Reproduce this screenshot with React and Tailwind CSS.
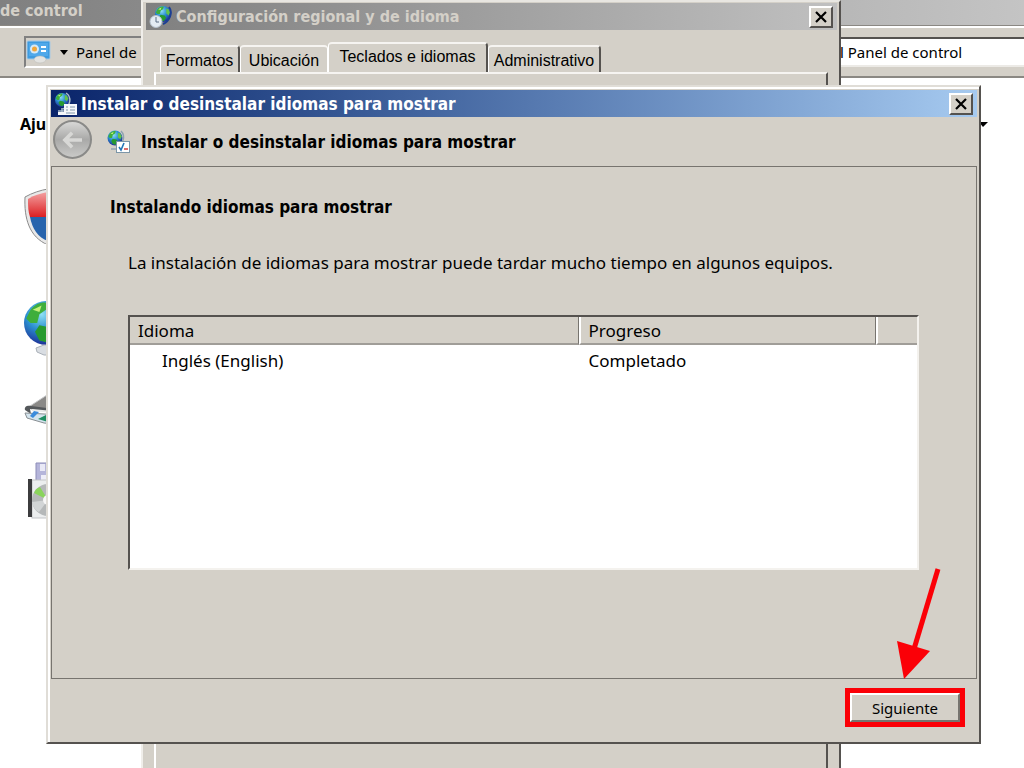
import clsx from 'clsx'

const tabs = [
  { label: 'Formatos', width: 'w-20' },
  { label: 'Ubicación', width: 'w-[88px]' },
  { label: 'Teclados e idiomas', width: 'w-40', active: true },
  { label: 'Administrativo', width: 'w-[113px]' },
]

const languages = [{ name: 'Inglés (English)', progress: 'Completado' }]

function Globe({ cx, cy, r, id }) {
  return (
    <g>
      <defs>
        <radialGradient id={id} cx="40%" cy="30%" r="70%">
          <stop offset="0" stopColor="#8fe0f5" />
          <stop offset="0.5" stopColor="#2b8fd0" />
          <stop offset="1" stopColor="#1d2f96" />
        </radialGradient>
      </defs>
      <g transform={`translate(${cx - r} ${cy - r}) scale(${r / 10})`}>
        <circle cx="10" cy="10" r="10" fill={`url(#${id})`} />
        <path d="M3 4C5 1 9 0 11 1L10 4 7 6 6 10 3 10 1 8Z" fill="#3fae3c" />
        <path d="M7 11 12 12 14 15 11 19 7 18 5 14Z" fill="#279a2f" />
        <path d="M14 3 17 4 19 8 17 12 14 9Z" fill="#63c34a" />
        <path d="M4 4 8 2 7 5Z" fill="#c5f07a" />
      </g>
    </g>
  )
}

function ClockGlobeIcon() {
  return (
    <svg width="24" height="26" viewBox="0 0 24 26" className="shrink-0" aria-hidden="true">
      <Globe cx={14} cy={10} r={8} id="globe-clock" />
      <path d="M20 3C24 8 21 17 14 20" fill="none" stroke="#1c3f94" strokeWidth="2" />
      <circle cx="7" cy="17.500" r="6" fill="#e3ebf3" stroke="#b5c0cc" />
      <path d="M7 13V18H10" fill="none" stroke="#5a6c84" strokeWidth="1" />
    </svg>
  )
}

function ListGlobeIcon() {
  return (
    <svg width="24" height="26" viewBox="0 0 24 26" className="shrink-0" aria-hidden="true">
      <Globe cx={8} cy={9} r={7} id="globe-list" />
      <path d="M12 2C18 6 17 15 9 18M8 17V21M4 20H11" fill="none" stroke="#a9bccb" strokeWidth="1.5" />
      <path d="M10 13H23V24H4V21H10Z" fill="#f5f8fb" />
      <path d="M12 16H14M16 16H21M12 19H14M16 19H21M12 22H21" stroke="#8096aa" strokeWidth="1" />
    </svg>
  )
}

function CheckGlobeIcon() {
  return (
    <svg width="24" height="24" viewBox="0 0 24 24" className="shrink-0" aria-hidden="true">
      <Globe cx={8} cy={8} r={7.5} id="globe-check" />
      <path d="M14 1C19 6 16 15 9 17M4 19H10" fill="none" stroke="#8fa3b2" strokeWidth="1.5" />
      <rect x="9.5" y="11.5" width="13" height="11" fill="#fff" stroke="#7c96a8" />
      <path d="M12 17 14 20 17 13" fill="none" stroke="#2575b8" strokeWidth="1.6" />
      <path d="M17 19H21" stroke="#d23c3c" strokeWidth="1.5" />
    </svg>
  )
}

function PanelIcon() {
  return (
    <svg width="26" height="24" viewBox="0 0 26 24" className="shrink-0" aria-hidden="true">
      <rect x="1" y="1" width="23" height="18" rx="1" fill="#3d9be0" stroke="#a6c9e6" />
      <rect x="3" y="3" width="19" height="13" fill="#4fa8ea" />
      <circle cx="8.500" cy="9" r="4.500" fill="#d4e9f7" />
      <circle cx="8.500" cy="9" r="2.500" fill="#f0a63a" />
      <path d="M15 7H20M15 11H20" stroke="#fff" strokeWidth="2" />
      <ellipse cx="14" cy="19.500" rx="6" ry="3.500" fill="#e3e3e0" stroke="#b9b9b4" strokeWidth="0.5" />
    </svg>
  )
}

function ShieldIcon() {
  return (
    <svg width="48" height="56" viewBox="0 0 48 56" aria-hidden="true">
      <defs>
        <linearGradient id="shield-red" x1="0" y1="0" x2="0" y2="1">
          <stop offset="0" stopColor="#f3a1a1" />
          <stop offset="1" stopColor="#dc1f22" />
        </linearGradient>
      </defs>
      <path d="M24 1C17 2 8 5 1 9 0 30 5 49 24 57 42 49 48 30 47 9 40 5 31 2 24 1Z" fill="#e8e8e8" stroke="#8b8b8b" />
      <path d="M24 4C18 5 10 7 4 11 4 18 4 23 6 29H24Z" fill="url(#shield-red)" />
      <path d="M6 29C8 40 14 50 24 53V29Z" fill="#2764ad" />
    </svg>
  )
}

function NetworkIcon() {
  return (
    <svg width="56" height="56" viewBox="0 0 56 56" aria-hidden="true">
      <Globe cx={22} cy={23} r={22} id="globe-network" />
      <path d="M12 48 20 45H40V55H20L13 52Z" fill="#d9dde2" stroke="#aab0b8" />
    </svg>
  )
}

function ScannerIcon() {
  return (
    <svg width="48" height="32" viewBox="0 0 48 32" aria-hidden="true">
      <path d="M3 14 23 1 46 8V18L8 14Z" fill="#8a8987" stroke="#c6c8ca" />
      <path d="M1 16C0 12 4 11 7 12L23 14V18L6 15 7 20Z" fill="#54585b" />
      <path d="M8 16 40 19" stroke="#e8eaea" strokeWidth="2" />
      <path d="M1 19 40 21V31L20 29 3 24Z" fill="#d4e4ed" stroke="#888e92" />
      <path d="M6 22 10 17 15 18 9 24Z" fill="#3c8cdc" />
      <path d="M14 25 24 20V28Z" fill="#1f8d62" />
    </svg>
  )
}

function ProgramsIcon() {
  return (
    <svg width="48" height="62" viewBox="0 0 48 62" aria-hidden="true">
      <path d="M8 1H40V22H8Z" fill="#b5b5da" stroke="#8d8db8" />
      <path d="M12 2H17V9H12Z" fill="#e9e9f6" />
      <path d="M13 13H35V20H13Z" fill="#eeeef8" />
      <rect x="4" y="18" width="40" height="38" fill="#eceeef" stroke="#c3c5c8" />
      <circle cx="20" cy="38" r="16" fill="#b5b8b9" />
      <path d="M20 38 6 31C7 28 9 26 12 25Z" fill="#8ad45c" />
      <path d="M20 38 4 40C5 45 7 48 11 50Z" fill="#d2d5d6" />
      <circle cx="20" cy="38" r="5" fill="#f7f7f7" />
      <rect x="0" y="17" width="4" height="38" fill="#3c3c3e" />
    </svg>
  )
}

function CloseButton() {
  return (
    <button
      type="button"
      aria-label="Cerrar"
      className="w-6 h-[22px] shrink-0 flex items-center justify-center bg-[#d4d0c8] border-2 border-t-white border-l-white border-r-[#55524f] border-b-[#55524f]"
    >
      <svg width="14" height="12" viewBox="0 0 14 12" aria-hidden="true">
        <path d="M2 1 12 11M12 1 2 11" stroke="#000" strokeWidth="2.2" />
      </svg>
    </button>
  )
}

function TitleBar({ icon, title, active }) {
  return (
    <div
      className={clsx(
        'flex items-center h-[27px] pl-[3px] pr-1 bg-linear-to-r',
        active
          ? 'from-[#0a246a] to-[#a6caf0] text-white text-[17px]'
          : 'from-[#808080] to-[#c0c0c0] text-[#d4d0c8] text-[16px]'
      )}
    >
      {icon}
      <h2 className="flex-1 pl-[3px] leading-5 font-bold font-['DejaVu_Sans_Condensed','DejaVu_Sans',sans-serif] whitespace-nowrap">
        {title}
      </h2>
      <CloseButton />
    </div>
  )
}

function Explorer() {
  return (
    <div className="h-full flex flex-col bg-white">
      <div className="h-[25px] shrink-0 bg-linear-to-r from-[#808080] to-[#c4c4c4] text-[#d4d0c8]">
        <h1 className="text-[16px] leading-[22px] font-bold font-['DejaVu_Sans_Condensed','DejaVu_Sans',sans-serif]">
          de control
        </h1>
      </div>
      <div className="shrink-0 h-[53px] flex justify-between bg-[#d4d0c8] border-t border-t-[#8b8883] border-b-2 border-b-[#8b8883]">
        <div className="flex-1 flex justify-between border-t-2 border-t-white pt-2">
          <div className="ml-6 w-80 h-8 flex items-center gap-2 border-2 border-t-[#808080] border-l-[#808080] border-b-white border-r-white text-black">
            <PanelIcon />
            <svg width="8" height="5" viewBox="0 0 8 5" aria-hidden="true">
              <path d="M0 0H8L4 5Z" />
            </svg>
            <span className="text-[15px] font-['Noto_Sans',sans-serif]">Panel de</span>
          </div>
          <input
            aria-label="Buscar"
            defaultValue="l Panel de control"
            className="mt-px w-[184px] h-[30px] bg-white border-y-2 border-t-[#55524f] border-b-[#eceae6] text-[15px] text-black font-['Noto_Sans',sans-serif] outline-none"
          />
        </div>
      </div>
      <div className="flex-1 flex flex-col items-start text-black">
        <div className="w-full flex justify-between pt-[34px]">
          <h2 className="pl-5 text-[16px] leading-6 font-bold font-['Noto_Sans',sans-serif]">Aju</h2>
          <svg width="9" height="5" viewBox="0 0 9 5" className="mt-2.5 mr-9" aria-hidden="true">
            <path d="M0 0H9L4 5Z" />
          </svg>
        </div>
        <div className="pl-6 pt-[52px] flex flex-col gap-14">
          <ShieldIcon />
          <NetworkIcon />
        </div>
        <div className="pl-6 pt-[38px] flex flex-col gap-9">
          <ScannerIcon />
          <div className="pl-1">
            <ProgramsIcon />
          </div>
        </div>
      </div>
    </div>
  )
}

function RegionWindow() {
  return (
    <section className="absolute left-[141px] right-[183px] top-0 -bottom-10 flex flex-col bg-[#d4d0c8] border-2 border-t-[#e8e6e1] border-l-[#f0eeea] border-r-[#55524f] border-b-[#55524f] pt-px pl-[3px] pr-0.5">
      <TitleBar icon={<ClockGlobeIcon />} title="Configuración regional y de idioma" />
      <div role="tablist" className="flex items-end pl-3.5 pt-3 h-[42px] text-black">
        {tabs.map((tab) => (
          <button
            key={tab.label}
            type="button"
            role="tab"
            aria-selected={Boolean(tab.active)}
            className={clsx(
              "border-t-2 border-l border-t-[#f6f4f1] border-l-white rounded-t-sm text-[16px] leading-5 font-['Liberation_Sans',sans-serif] whitespace-nowrap",
              tab.width,
              tab.active ? 'h-[30px] pb-0.5' : 'h-[27px] pt-0.5',
              tab.label === 'Ubicación' ? 'border-r border-r-white' : 'border-r-2 border-r-[#55524f]'
            )}
          >
            {tab.label}
          </button>
        ))}
      </div>
      <div className="flex-1 ml-2 mr-[9px] border-t-2 border-l-2 border-r-2 border-t-[#f6f4f1] border-l-white border-r-[#55524f]" />
    </section>
  )
}

function LanguageTable() {
  const head = 'h-7 pt-0.5 pl-2 text-left font-normal border-b-2 border-b-[#a09d98]'
  return (
    <div className="h-[255px] bg-white border-2 border-t-[#55524f] border-l-[#55524f] border-r-[#f4f2ee] border-b-[#f4f2ee]">
      <table className="w-full table-fixed border-separate border-spacing-0 text-[17px] leading-6">
        <colgroup>
          <col className="w-[57%]" />
          <col />
          <col className="w-[41px]" />
        </colgroup>
        <thead className="bg-[#d4d0c8]">
          <tr>
            <th className={clsx(head, 'border-r border-r-[#77746f]')}>Idioma</th>
            <th className={clsx(head, 'border-l-2 border-l-white border-r border-r-[#77746f]')}>Progreso</th>
            <th className={clsx(head, 'border-l-2 border-l-white')} />
          </tr>
        </thead>
        <tbody>
          {languages.map((lang) => (
            <tr key={lang.name}>
              <td className="h-8 pl-8">{lang.name}</td>
              <td className="pl-2.5">{lang.progress}</td>
              <td />
            </tr>
          ))}
        </tbody>
      </table>
    </div>
  )
}

function InstallWizard() {
  return (
    <section className="absolute left-[46px] right-[43px] top-[85px] bottom-6 flex flex-col border-2 border-t-[#e0ddd7] border-l-[#e0ddd7] border-r-[#55524f] border-b-[#55524f] bg-[#d4d0c8] text-black font-['Noto_Sans',sans-serif]">
      <div className="flex-1 flex flex-col border-t-2 border-l-2 border-white pt-px pl-px pr-0.5">
        <TitleBar active icon={<ListGlobeIcon />} title="Instalar o desinstalar idiomas para mostrar" />
        <header className="h-[49px] shrink-0 flex items-center pl-0.5">
          <button
            type="button"
            aria-label="Atrás"
            className="w-[39px] h-[39px] mb-1 rounded-full border-2 border-[#8a8a88] bg-linear-to-b from-[#d8d8d6] via-[#a9a9a8] to-[#c9c9c7] flex items-center justify-center"
          >
            <svg width="22" height="18" viewBox="0 0 24 20" aria-hidden="true">
              <path d="M11 2 3 10 11 18M3 10H22" fill="none" stroke="#d8d8d6" strokeWidth="4" />
            </svg>
          </button>
          <div className="ml-[15px] flex items-center gap-2.5">
            <CheckGlobeIcon />
            <h3 className="text-[17px] leading-6 font-bold font-['DejaVu_Sans_Condensed','DejaVu_Sans',sans-serif]">
              Instalar o desinstalar idiomas para mostrar
            </h3>
          </div>
        </header>
        <main className="flex-1 border border-[#77746f] pl-[76px] pr-[57px]">
          <h4 className="-ml-[18px] pt-7 text-[17px] leading-6 font-bold font-['DejaVu_Sans_Condensed','DejaVu_Sans',sans-serif]">
            Instalando idiomas para mostrar
          </h4>
          <p className="pt-8 pb-10 text-[17px] leading-6">
            La instalación de idiomas para mostrar puede tardar mucho tiempo en algunos equipos.
          </p>
          <LanguageTable />
        </main>
        <footer className="relative shrink-0 h-[63px] pt-[9px] pr-3 flex justify-end items-start">
          <div className="border-[5px] border-[#fb0007]">
            <button
              type="button"
              className="w-[110px] h-[29px] text-[15px] leading-5 border-2 border-t-white border-l-white border-r-[#77746f] border-b-[#77746f]"
            >
              Siguiente
            </button>
          </div>
          <svg width="46" height="112" viewBox="0 0 46 112" className="absolute right-[34px] bottom-[62px]" aria-hidden="true">
            <path d="M41 1 17 81" stroke="#fb0007" strokeWidth="5" />
            <path d="M0 73 33 83 7 111Z" fill="#fb0007" />
          </svg>
        </footer>
      </div>
    </section>
  )
}

export default function App() {
  return (
    <div className="relative h-screen overflow-hidden">
      <Explorer />
      <RegionWindow />
      <InstallWizard />
    </div>
  )
}
